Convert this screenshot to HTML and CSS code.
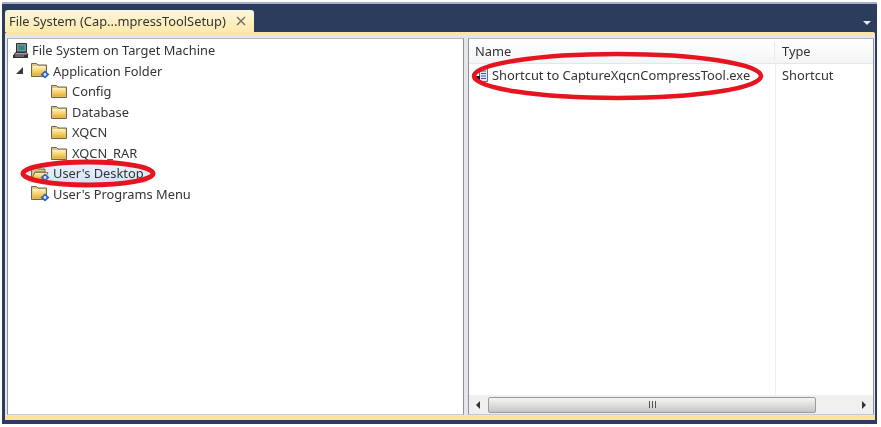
FILE: index.html

```html
<!DOCTYPE html>
<html>
<head>
    <meta charset="UTF-8">
    <title>File System</title>
    <link rel="stylesheet" href="styles.css">
</head>
<body>
    <svg class="defs" width="0" height="0">
        <defs>
            <linearGradient id="fold" x1="0" y1="0" x2="0" y2="1">
                <stop offset="0" stop-color="#fff3c4"/>
                <stop offset="0.3" stop-color="#fbe08a"/>
                <stop offset="1" stop-color="#e8ae2c"/>
            </linearGradient>
            <symbol id="folder" viewBox="0 0 18 16">
                <path d="M1.500 2.500h5l1.500 1.500h8.500v10.500h-15z" fill="#d9c48c" stroke="#6f6748"/>
                <path d="M2.500 5h13v8.500h-13z" fill="url(#fold)"/>
            </symbol>
            <symbol id="badge-folder" viewBox="0 0 20 17">
                <path d="M1.500 1.500h5l1.500 1.500h8.500v11.500h-15z" fill="#d9c48c" stroke="#6f6748"/>
                <path d="M2.500 4h13v9.500h-13z" fill="url(#fold)"/>
                <path d="M15 8.500l4.500 4-4.500 4-4.500-4z" fill="#2f66c4"/>
                <circle cx="15" cy="12.500" r="1.400" fill="#dfeaff"/>
            </symbol>
            <symbol id="open-folder" viewBox="0 0 20 17">
                <path d="M1.500 2.500h5l1.500 1.500h7v3h-10l-3.500 7z" fill="#d9c48c" stroke="#6f6748"/>
                <path d="M5 7.500h13l-3 7h-13.500z" fill="url(#fold)" stroke="#8f8050"/>
                <path d="M15 8.500l4.500 4-4.500 4-4.500-4z" fill="#2f66c4"/>
                <circle cx="15" cy="12.500" r="1.400" fill="#dfeaff"/>
            </symbol>
        </defs>
    </svg>

    <div class="window">
        <div class="tabbar">
            <div class="tab">
                <span>File System (Cap...mpressToolSetup)</span>
                <svg class="tab-close" width="10" height="10" viewBox="0 0 10 10"><path d="M1 1l8 8M9 1l-8 8" stroke="#77736a" stroke-width="1.500"/></svg>
            </div>
            <div class="tab-menu"></div>
        </div>
        <div class="doc">
            <div class="panes">
                <div class="pane tree">
                    <div class="row">
                        <svg class="icon-pc" width="17" height="17" viewBox="0 0 17 17">
                            <path d="M4.500 1.500h10v8.500h-10z" fill="#8a8e90" stroke="#2c3034"/>
                            <path d="M6.500 3.500h6v4.500h-6z" fill="#1f8d8a"/>
                            <path d="M3.500 10.500h11l1.500 2.500h-14z" fill="#a4a7a8" stroke="#2c3034"/>
                            <path d="M1 13h15v3h-15z" fill="#2f3337"/>
                            <path d="M3 14h9" stroke="#9a9da0"/>
                        </svg>
                        <span>File System on Target Machine</span>
                    </div>
                    <div class="row lvl1">
                        <span class="arrow"></span>
                        <svg class="icon" width="20" height="17"><use href="#badge-folder"/></svg>
                        <span>Application Folder</span>
                    </div>
                    <div class="row lvl2"><svg class="icon" width="18" height="16"><use href="#folder"/></svg><span>Config</span></div>
                    <div class="row lvl2"><svg class="icon" width="18" height="16"><use href="#folder"/></svg><span>Database</span></div>
                    <div class="row lvl2"><svg class="icon" width="18" height="16"><use href="#folder"/></svg><span>XQCN</span></div>
                    <div class="row lvl2"><svg class="icon" width="18" height="16"><use href="#folder"/></svg><span>XQCN_RAR</span></div>
                    <div class="row lvl1 selected"><svg class="icon" width="20" height="17"><use href="#open-folder"/></svg><span>User's Desktop</span></div>
                    <div class="row lvl1"><svg class="icon" width="20" height="17"><use href="#badge-folder"/></svg><span>User's Programs Menu</span></div>
                </div>
                <div class="pane list">
                    <div class="list-head">
                        <div class="col-name">Name</div>
                        <div class="col-type">Type</div>
                    </div>
                    <div class="list-body">
                        <div class="col-name item">
                            <svg class="icon-file" width="12" height="14" viewBox="0 0 12 14">
                                <path d="M3.500.500h8v13h-8z" fill="#dfe6f2" stroke="#5a6f92"/>
                                <path d="M5 3h5M5 5.500h5M5 8h5M5 10.500h5" stroke="#3c5c9a"/>
                                <path d="M0 8h4v5h-4z" fill="#1c1c1c"/>
                            </svg>
                            <span>Shortcut to CaptureXqcnCompressTool.exe</span>
                        </div>
                        <div class="col-type">Shortcut</div>
                    </div>
                    <div class="hscroll">
                        <span class="arr arr-left"></span>
                        <div class="thumb"><span class="grip"></span></div>
                        <span class="arr arr-right"></span>
                    </div>
                </div>
            </div>
        </div>
    </div>

    <!-- red marks drawn over the screenshot -->
    <svg class="marks" width="881" height="427" viewBox="0 0 881 427">
        <ellipse cx="88" cy="173.500" rx="65" ry="11.500" fill="none" stroke="#e5141f" stroke-width="5"/>
        <ellipse cx="617.500" cy="76" rx="143.500" ry="22" fill="none" stroke="#e5141f" stroke-width="4.500"/>
    </svg>
</body>
</html>
```

FILE: styles.css

```css
html, body {
    height: 100%;
}
body {
    margin: 0;
    background: #fff;
    font-family: "Noto Sans", "Open Sans", sans-serif;
    font-size: 12.860px;
    color: #333;
    overflow: hidden;
    position: relative;
}
.defs {
    position: absolute;
}
.window {
    width: 875px;
    height: 422px;
    margin: 2px 0 0 2px;
    padding: 0 2px 4px 3px;
    box-sizing: border-box;
    border-top: 2px solid #a7b0c6;
    background: #2b3c5d;
    display: flex;
    flex-direction: column;
    filter: blur(0.350px);
}
.tabbar {
    height: 28px;
    flex: none;
    display: flex;
    align-items: flex-end;
    justify-content: space-between;
}
.tab {
    width: 249px;
    height: 22px;
    box-sizing: border-box;
    padding-left: 4px;
    background: linear-gradient(#fdf6dc, #fde9ac);
    border-radius: 3px 3px 0 0;
    display: flex;
    align-items: center;
    white-space: nowrap;
}
.tab-close {
    margin-left: 10px;
}
.tab-menu {
    width: 0;
    height: 0;
    margin: 0 4px 7px 0;
    border-left: 4px solid transparent;
    border-right: 4px solid transparent;
    border-top: 4px solid #e6eaf2;
}
.doc {
    flex: 1;
    min-height: 0;
    border-top: 3px solid #fde6a4;
    border-bottom: 4px solid #fde39a;
    border-radius: 2px 2px 0 0;
    background: #e4e6ea;
    display: flex;
}
.panes {
    flex: 1;
    display: flex;
    gap: 4px;
    padding: 3px 1px 1px 2px;
}
.pane {
    background: #fff;
    border: 1px solid #8e939a;
    border-top-color: #b4b8be;
    border-bottom-color: #c4c7cc;
    box-sizing: border-box;
    min-width: 0;
}
.tree {
    width: 457px;
    padding-top: 1px;
}
.row {
    height: 20.500px;
    display: flex;
    align-items: center;
    padding-left: 4px;
    white-space: nowrap;
}
.icon-pc {
    margin-right: 3px;
}
.lvl1 {
    padding-left: 22px;
}
.lvl1 .arrow {
    width: 0;
    height: 0;
    margin-left: -14px;
    margin-right: 7px;
    border-left: 7px solid transparent;
    border-bottom: 7px solid #3c3c3c;
}
.lvl2 {
    padding-left: 42px;
}
.lvl2 .icon {
    margin-right: 4px;
}
.icon {
    margin-right: 3px;
    flex: none;
}
.selected {
    margin: 0.750px 315px 0.750px 20px;
    padding-left: 2px;
    height: 19px;
    background: linear-gradient(#eaf2fc, #d2e3f7);
    border-radius: 2px;
}
.list {
    flex: 1;
    display: flex;
    flex-direction: column;
}
.list-head {
    height: 25px;
    flex: none;
    display: flex;
    align-items: center;
    background: linear-gradient(#fff, #f4f5f7);
    border-bottom: 1px solid #e4e6ea;
    box-sizing: border-box;
}
.list-body {
    flex: 1;
    display: flex;
    background: linear-gradient(90deg, #fff 306px, #e8eff7 306px, #e8eff7 307px, #fff 307px);
}
.col-name {
    width: 306px;
    flex: none;
    padding-left: 6px;
    box-sizing: border-box;
    border-right: 1px solid #e6e8ec;
}
.col-type {
    padding-left: 7px;
}
.list-body .col-name,
.list-body .col-type {
    height: 22px;
    line-height: 22px;
}
.list-body .col-name {
    border-right: 0;
}
.item {
    display: flex;
    align-items: center;
    gap: 4px;
    padding-left: 7px;
}
.hscroll {
    height: 19px;
    flex: none;
    display: flex;
    align-items: center;
    background: #f0f0f0;
}
.arr {
    width: 0;
    height: 0;
    border-top: 4px solid transparent;
    border-bottom: 4px solid transparent;
}
.arr-left {
    margin: 0 8px 0 7px;
    border-right: 4px solid #333;
}
.arr-right {
    margin-left: 46px;
    border-left: 4px solid #333;
}
.thumb {
    width: 328px;
    height: 16px;
    flex: none;
    box-sizing: border-box;
    border: 1px solid #9a9a9a;
    border-radius: 2px;
    background: linear-gradient(#f4f4f4, #dedede 50%, #c4c4c4);
    display: flex;
    align-items: center;
    justify-content: center;
}
.grip {
    width: 7px;
    height: 7px;
    background: repeating-linear-gradient(90deg, #555 0 1px, transparent 1px 3px);
}
.marks {
    position: absolute;
    left: 0;
    top: 0;
    pointer-events: none;
}
```
